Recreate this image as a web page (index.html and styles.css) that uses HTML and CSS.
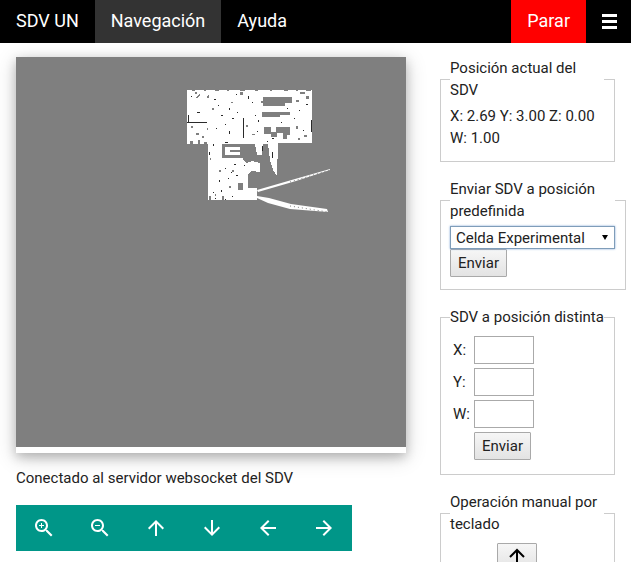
FILE: index.html
```html
<!DOCTYPE html>
<html>
<head>
    <title>SDV UN - Navegación</title>
    <link rel="stylesheet" href="styles.css">
</head>
<body>
    <div class="nav-bar">
        <a class="nav-item">SDV UN</a>
        <a class="nav-item nav-active">Navegación</a>
        <a class="nav-item">Ayuda</a>
        <a class="nav-item nav-stop">Parar</a>
        <a class="nav-menu"><span></span><span></span><span></span></a>
    </div>

    <div class="main">
        <div class="map-col">
            <div class="map-card">
                <svg class="map" viewBox="16 57 390 390" shape-rendering="crispEdges">
                    <rect x="16" y="57" width="390" height="390" fill="#7f7f7f"/>
                    <!-- free space -->
                    <path fill="#fff" d="M187 90H312V143H278L277 176 273 170 270 160 268 144H263L262 155H257L255 144H243V160L246 163 252 161 260 163V172L252 171 248 174V188H257V200H208V144H187Z"/>
                    <path fill="#fff" shape-rendering="auto" d="M257 190l38-11 35-10v1l-34 11-38 11zM257 196l12 2 22 6 36 5 1 3-38-3-22-6-11-5z"/>
                    <path fill="none" stroke="#7f7f7f" stroke-width="1" stroke-dasharray="1 3" shape-rendering="auto" d="M290 182l40-12M290 206l38 6"/>
                    <!-- unknown pockets -->
                    <path fill="#7f7f7f" d="M263 97h29v6h-7v3h-22v-3h-2v-2h2zM262 112h28v3h-10v2h-18zM264 127h7v5h5v-5h14v8h-3v4h-4v-6h-6v4h-6v-3h-7zM222 144h21v14h-21zM238 183h5v7h-5zM195 92h2v2h-2zM207 96l2-1v3h-2zM196 97l3-3 1 1-3 4zM240 92h3v3h-3zM300 92h5v2h-5zM306 96h3v3h-3zM296 100h3v2h-3z"/>
                    <path fill="#fff" d="M225 147h15v3h-10v2h10v3h-15z"/>
                    <!-- walls and speckle -->
                    <path fill="#2a2a2a" d="M187 122h20v1h-20zM243 118h1v20h-1zM188 115h1v7h-1zM221 115h2v1h-2zM229 108h1v2h-1zM218 105h1v1h-1zM232 118h2v1h-2zM236 94h1v1h-1zM248 96h1v3h-1zM252 102h1v1h-1zM255 115h1v1h-1zM258 120h1v2h-1zM272 138h2v1h-2zM281 122h1v1h-1zM294 118h1v1h-1zM303 130h1v1h-1zM311 120h1v12h-1zM306 104h2v1h-2zM197 112h3v1h-3zM214 99h2v1h-2zM225 124h1v1h-1zM229 131h1v3h-1zM209 152h1v3h-1zM213 144h1v2h-1zM262 146h1v5h-1zM272 152h1v6h-1zM225 168h1v1h-1zM231 172h1v1h-1zM236 175h2v1h-2zM219 180h1v2h-1zM228 178h1v1h-1zM213 192h1v1h-1zM221 190h1v2h-1zM232 196h1v1h-1zM234 164h2v1h-2zM244 165h1v1h-1zM191 96h1v1h-1zM216 128h1v1h-1zM237 112h1v1h-1zM257 131h1v1h-1zM287 108h1v1h-1zM299 110h1v1h-1zM267 141h1v1h-1zM215 198h1v1h-1zM225 199h1v1h-1zM225 142h3v1h-3z"/>
                    <path fill="#7f7f7f" d="M192 90h3v1h-3zM204 90h2v1h-2zM215 90h4v1h-4zM227 90h2v1h-2zM240 90h5v1h-5zM255 90h3v1h-3zM270 90h2v1h-2zM284 90h4v1h-4zM296 90h2v1h-2zM306 90h5v1h-5zM190 141h3v3h-3zM198 140h2v4h-2zM204 142h3v2h-3zM191 126h2v2h-2zM196 133h3v2h-3zM202 136h2v2h-2zM207 128h1v2h-1zM212 108h2v2h-2zM231 102h2v1h-2zM246 125h2v2h-2zM252 134h3v1h-3zM296 126h2v3h-2zM304 135h3v2h-3zM298 138h2v2h-2zM210 158h1v2h-1zM209 196h2v4h-2zM215 194h1v2h-1zM222 196h2v4h-2zM219 170h2v2h-2zM229 186h2v2h-2zM232 170h2v2h-2z"/>
                </svg>
            </div>
            <p class="status">Conectado al servidor websocket del SDV</p>
            <div class="map-tools">
                <a class="tool"><svg viewBox="0 0 24 24"><path d="M15.5 14h-.79l-.28-.27C15.41 12.59 16 11.11 16 9.5 16 5.91 13.09 3 9.5 3S3 5.91 3 9.5 5.91 16 9.5 16c1.61 0 3.09-.59 4.23-1.57l.27.28v.79l5 4.99L20.49 19l-4.99-5zm-6 0C7.01 14 5 11.99 5 9.5S7.01 5 9.5 5 14 7.01 14 9.5 11.99 14 9.5 14z"/><path d="M12 10h-2v2H9v-2H7V9h2V7h1v2h2v1z"/></svg></a>
                <a class="tool"><svg viewBox="0 0 24 24"><path d="M15.5 14h-.79l-.28-.27C15.41 12.59 16 11.11 16 9.5 16 5.91 13.09 3 9.5 3S3 5.91 3 9.5 5.91 16 9.5 16c1.61 0 3.09-.59 4.23-1.57l.27.28v.79l5 4.99L20.49 19l-4.99-5zm-6 0C7.01 14 5 11.99 5 9.5S7.01 5 9.5 5 14 7.01 14 9.5 11.99 14 9.5 14z"/><path d="M7 9h5v1H7z"/></svg></a>
                <a class="tool"><svg viewBox="0 0 24 24"><path d="M4 12l1.41 1.41L11 7.83V20h2V7.83l5.58 5.59L20 12l-8-8-8 8z"/></svg></a>
                <a class="tool"><svg viewBox="0 0 24 24"><path d="M20 12l-1.41-1.41L13 16.17V4h-2v12.17l-5.58-5.59L4 12l8 8 8-8z"/></svg></a>
                <a class="tool"><svg viewBox="0 0 24 24"><path d="M20 11H7.83l5.59-5.59L12 4l-8 8 8 8 1.41-1.41L7.83 13H20v-2z"/></svg></a>
                <a class="tool"><svg viewBox="0 0 24 24"><path d="M12 4l-1.41 1.41L16.17 11H4v2h12.17l-5.58 5.59L12 20l8-8z"/></svg></a>
            </div>
        </div>

        <div class="side-col">
            <fieldset class="panel">
                <legend>Posición actual del SDV</legend>
                <p class="position">X: 2.69 Y: 3.00 Z: 0.00 W: 1.00</p>
            </fieldset>

            <fieldset class="panel">
                <legend>Enviar SDV a posición predefinida</legend>
                <div class="goal-select">
                    <select>
                        <option>Celda Experimental</option>
                    </select>
                </div>
                <button class="btn">Enviar</button>
            </fieldset>

            <fieldset class="panel">
                <legend>SDV a posición distinta</legend>
                <div class="coord-form">
                    <label>X:</label><input type="text">
                    <label>Y:</label><input type="text">
                    <label>W:</label><input type="text">
                    <button class="btn">Enviar</button>
                </div>
            </fieldset>

            <fieldset class="panel">
                <legend>Operación manual por teclado</legend>
                <div class="keys">
                    <button class="btn key key-up">
                        <svg viewBox="0 0 18 18"><path d="M9 16V2M2 9l7-7 7 7"/></svg>
                    </button>
                </div>
            </fieldset>
        </div>
    </div>
</body>
</html>
```

FILE: styles.css
```css
html {
    overflow: hidden;
}

body {
    font-family: Roboto, "Liberation Sans", sans-serif;
    font-size: 15px;
    line-height: 22px;
    color: #222;
    margin: 0;
    padding: 0;
}

.nav-bar {
    display: flex;
    height: 43px;
    background-color: #000;
    color: #fff;
    font-size: 18px;
    line-height: 42px;
}

.nav-item {
    padding: 0 16px;
}

.nav-active {
    background-color: #333;
}

.nav-stop {
    margin-left: auto;
    background-color: #f00;
}

.nav-menu {
    display: flex;
    flex-direction: column;
    justify-content: center;
    gap: 3px;
    width: 45px;
    padding: 0 14px 0 16px;
    box-sizing: border-box;
}

    .nav-menu span {
        height: 3px;
        background-color: #fff;
    }

.main {
    display: flex;
    padding: 14px 0 0 16px;
}

.map-col {
    width: 390px;
    flex-shrink: 0;
}

.map-card {
    padding-bottom: 6px;
    background-color: #fff;
    box-shadow: 0 4px 10px 0 rgba(0, 0, 0, 0.2), 0 4px 20px 0 rgba(0, 0, 0, 0.19);
}

.map {
    display: block;
    width: 390px;
    height: 390px;
}

.status {
    margin: 14px 0 16px;
}

.map-tools {
    display: flex;
    width: 336px;
    height: 46px;
    background-color: #009688;
}

.tool {
    display: flex;
    align-items: center;
    justify-content: center;
    width: 56px;
}

    .tool svg {
        width: 24px;
        height: 24px;
        fill: #fff;
    }

.side-col {
    width: 175px;
    margin-left: 34px;
    flex-shrink: 0;
}

.panel {
    margin: 0 0 16px;
    padding: 0 10px 12px 9px;
    border: 1px solid #ccc;
}

    .panel legend {
        padding: 0;
    }

.position {
    margin: 4px 0 0;
}

.goal-select {
    position: relative;
    width: 165px;
    margin-top: 4px;
}

    .goal-select select {
        display: block;
        width: 100%;
        height: 23px;
        padding: 0 0 0 5px;
        font-family: inherit;
        font-size: 15px;
        color: #222;
        background-color: #fff;
        border: 1px solid #7f9db9;
        border-radius: 0;
        box-shadow: 0 0 2px #7fa6d6;
        appearance: none;
    }

    .goal-select::after {
        content: "";
        position: absolute;
        top: 9px;
        right: 7px;
        border-left: 3px solid transparent;
        border-right: 3px solid transparent;
        border-top: 5px solid #000;
    }

.btn {
    display: block;
    width: 57px;
    height: 28px;
    padding: 0;
    font-family: inherit;
    font-size: 15px;
    color: #222;
    background: linear-gradient(#f6f6f6, #e3e3e3);
    border: 1px solid #a9a9a9;
    border-radius: 1px;
}

.coord-form {
    display: grid;
    grid-template-columns: 24px 60px;
    gap: 4px 0;
    align-items: center;
    margin-top: 8px;
    padding-bottom: 2px;
}

    .coord-form label {
        padding-left: 3px;
    }

    .coord-form input {
        width: 60px;
        height: 28px;
        padding: 0;
        box-sizing: border-box;
        border: 1px solid #aaa;
    }

    .coord-form .btn {
        grid-column: 2;
    }

.keys {
    display: grid;
    grid-template-columns: repeat(3, 40px);
    padding-left: 7px;
    margin-top: 8px;
}

.key {
    width: 40px;
}

.key-up {
    grid-column: 2;
}

    .key svg {
        display: block;
        width: 18px;
        height: 18px;
        margin: 0 auto;
        fill: none;
        stroke: #000;
        stroke-width: 2;
    }
```
